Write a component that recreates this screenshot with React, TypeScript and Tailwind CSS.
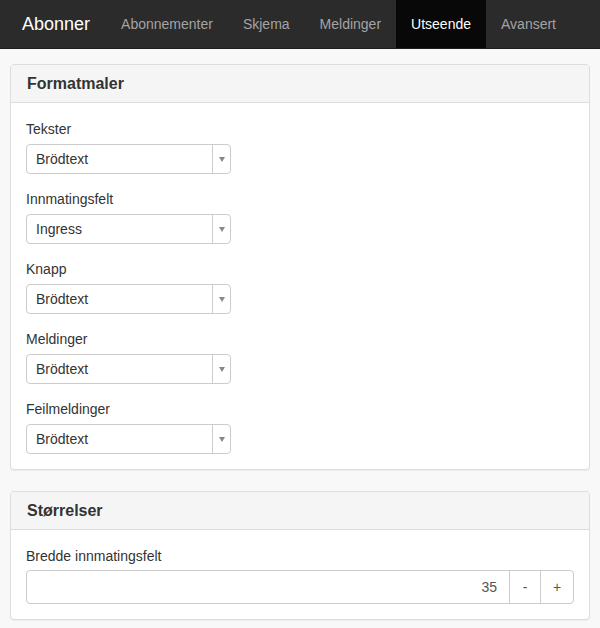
const navLinks = ["Abonnementer", "Skjema", "Meldinger", "Utseende", "Avansert"];

const styleFields = [
  { label: "Tekster", value: "Brödtext" },
  { label: "Innmatingsfelt", value: "Ingress" },
  { label: "Knapp", value: "Brödtext" },
  { label: "Meldinger", value: "Brödtext" },
  { label: "Feilmeldinger", value: "Brödtext" },
];

function Panel({ title, children }: { title: string; children: React.ReactNode }) {
  return (
    <div className="bg-white border border-[#dddddd] rounded-[4px] shadow-[0_1px_1px_rgba(0,0,0,0.05)] overflow-hidden">
      <div className="h-[38px] px-[16px] flex items-center bg-[#f5f5f5] border-b border-[#dddddd]">
        <h3 className="text-[16px] font-bold text-[#333333]">{title}</h3>
      </div>
      <div className="px-[15px] pt-[16px] pb-[15px] flex flex-col gap-[15px]">{children}</div>
    </div>
  );
}

function FakeSelect({ value }: { value: string }) {
  return (
    <div className="w-[205px] h-[30px] flex border border-[#cccccc] rounded-[4px] bg-white">
      <div className="flex-1 flex items-center pl-[9px] pt-[1px] text-[14px] text-[#333333]">{value}</div>
      <div className="w-[18px] border-l border-[#cccccc] flex items-center justify-center">
        <svg width="6" height="5" viewBox="0 0 6 5">
          <path d="M0 0 L6 0 L3 5 Z" fill="#888888" />
        </svg>
      </div>
    </div>
  );
}

export default function App() {
  return (
    <div className="min-h-screen bg-[#f8f8f8] font-['Liberation_Sans',Arial,sans-serif]">
      <nav className="h-[49px] bg-[#2b2b2b] border-b border-[#1c1c1c] flex">
        <span className="pl-[22px] pr-[16px] flex items-center text-[18px] text-white">Abonner</span>
        {navLinks.map((link) => (
          <a
            key={link}
            className={
              link === "Utseende"
                ? "px-[15px] flex items-center text-[14px] text-white bg-[#080808]"
                : "px-[15px] flex items-center text-[14px] text-[#a3a3a3]"
            }
          >
            {link}
          </a>
        ))}
      </nav>

      <div className="px-[10px] pt-[15px] flex flex-col gap-[21px]">
        <Panel title="Formatmaler">
          {styleFields.map((f) => (
            <div key={f.label}>
              <label className="block h-[20px] leading-[20px] mb-[5px] text-[14px] text-[#333333]">{f.label}</label>
              <FakeSelect value={f.value} />
            </div>
          ))}
        </Panel>

        <Panel title="Størrelser">
          <div>
            <label className="block h-[20px] leading-[20px] mb-[4px] text-[14px] text-[#333333]">
              Bredde innmatingsfelt
            </label>
            <div className="h-[34px] flex border border-[#cccccc] rounded-[4px] bg-white text-[14px] text-[#555555]">
              <div className="flex-1 flex items-center justify-end pr-[12px]">35</div>
              <button className="w-[31px] border-l border-[#cccccc] flex items-center justify-center">-</button>
              <button className="w-[33px] border-l border-[#cccccc] flex items-center justify-center">+</button>
            </div>
          </div>
        </Panel>
      </div>
    </div>
  );
}
